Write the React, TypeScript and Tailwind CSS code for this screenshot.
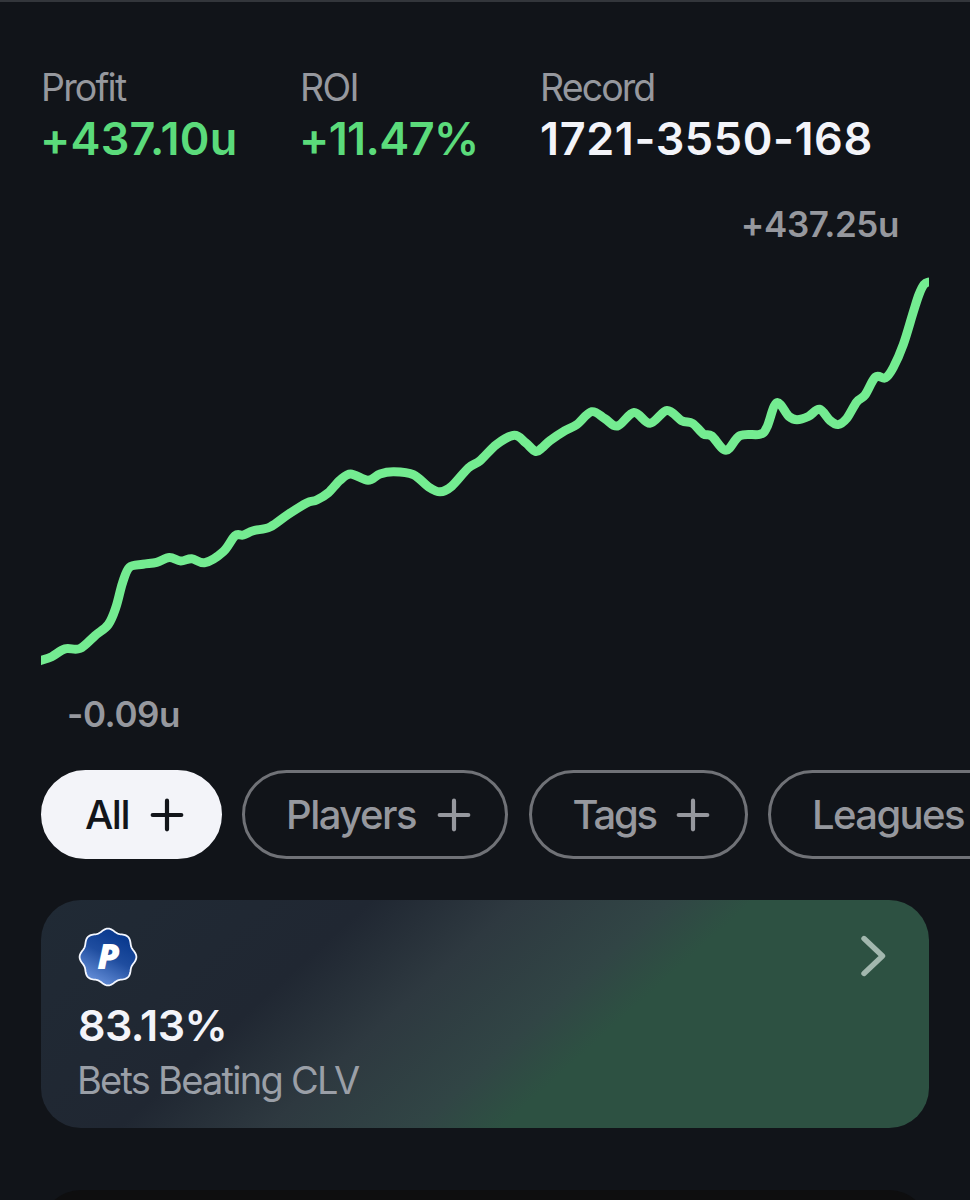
type Point = [number, number];

const stats = [
  { label: "Profit", value: "+437.10u", width: "w-[259px]", labelStyle: "tracking-[-1.8px]", color: "-ml-px text-[#5bdb7b] tracking-[0.2px]" },
  { label: "ROI", value: "+11.47%", width: "w-[240px]", labelStyle: "tracking-[-1.6px]", color: "-ml-px text-[#5bdb7b] tracking-[-0.6px]" },
  { label: "Record", value: "1721-3550-168", width: "w-[340px]", labelStyle: "tracking-[-1.9px]", color: "text-[#f3f4f9] tracking-[0.6px]" },
];

const filters = [
  { label: "All", width: "w-[180.5px]", labelStyle: "tracking-[-1.5px]", active: true },
  { label: "Players", width: "w-[266px]", labelStyle: "tracking-[-1.5px]", active: false },
  { label: "Tags", width: "w-[219px]", labelStyle: "tracking-[-2.2px]", active: false },
  { label: "Leagues", width: "w-[280px]", labelStyle: "tracking-[-1.6px]", active: false },
];

const history: Point[] = [
  [36, 662], [41.3, 660.3], [51.7, 656.7], [65, 648.9], [80, 648.5], [95, 635.7], [108.3, 624.5], [116, 607],
  [122.5, 583], [129.5, 567.2], [143, 564.3], [156.7, 562.3], [169.3, 557.5], [180.7, 561], [191.7, 558.7],
  [205, 562.7], [223.3, 551.7], [235, 535.8], [243.3, 535], [253.3, 530.7], [270, 527], [288, 514.5],
  [306.7, 503], [316.7, 500], [328.3, 492.7], [340, 480.3], [350.7, 474], [368, 480.3], [380, 473.9],
  [394, 471.7], [413.3, 474.6], [428.3, 486.7], [440, 491.8], [451.7, 486.2], [468.3, 468], [480, 460.7],
  [496.7, 444.3], [514.3, 435.3], [525.5, 442.7], [535.5, 451.4], [542, 447.8], [550, 440.7], [565, 430.7],
  [576.7, 424.7], [591.7, 411.7], [605, 418.8], [617.5, 426], [634, 412.5], [650, 423.3], [667, 410.5],
  [681.7, 420.7], [692.7, 423.5], [703.3, 433.9], [711.7, 436], [726, 450.3], [740, 435.6], [760, 434.3],
  [767, 427], [776.7, 402.7], [789, 416.5], [797, 419.7], [808.3, 416.5], [819.5, 409.3], [830, 420.5],
  [838, 424.6], [846.7, 418.5], [856.7, 402], [865, 395], [875.5, 377], [885.5, 377.9], [893.3, 367.5],
  [903.3, 344.5], [913.3, 312], [919, 294.5], [924, 284.5], [929, 282], [934, 282],
];

function smoothPath(points: Point[]) {
  let d = `M${points[0][0]} ${points[0][1]}`;
  for (let i = 0; i < points.length - 1; i++) {
    const [x0, y0] = points[Math.max(i - 1, 0)];
    const [x1, y1] = points[i];
    const [x2, y2] = points[i + 1];
    const [x3, y3] = points[Math.min(i + 2, points.length - 1)];
    d += ` C${x1 + (x2 - x0) / 6} ${y1 + (y2 - y0) / 6} ${x2 - (x3 - x1) / 6} ${y2 - (y3 - y1) / 6} ${x2} ${y2}`;
  }
  return d;
}

// eight rounded lobes around the centre of the badge
function sealPath() {
  const points: string[] = [];
  for (let i = 0; i < 160; i++) {
    const a = (i / 160) * Math.PI * 2;
    const r = 26.9 + 1.5 * Math.cos(a * 8);
    points.push(`${(30 + r * Math.sin(a)).toFixed(2)} ${(30 - r * Math.cos(a)).toFixed(2)}`);
  }
  return `M${points.join("L")}Z`;
}

function PlusIcon() {
  return (
    <svg viewBox="0 0 34 34" className="size-[34px] shrink-0" fill="none" stroke="currentColor" strokeWidth="4.2" strokeLinecap="round">
      <path d="M17 2.700v28.600M2.700 17h28.600" />
    </svg>
  );
}

function Badge() {
  return (
    <svg viewBox="0 0 60 60" className="size-[60px]">
      <defs>
        <linearGradient id="badge" x1="0.7" y1="0.15" x2="0.25" y2="1">
          <stop offset="0" stopColor="#0b3b90" />
          <stop offset="0.4" stopColor="#1f4d9f" />
          <stop offset="1" stopColor="#6c95de" />
        </linearGradient>
      </defs>
      <path d={sealPath()} fill="url(#badge)" stroke="#f4f7ff" strokeWidth="1.8" strokeLinejoin="round" />
      <text x="30.500" y="42.300" textAnchor="middle" fill="#fff" fontFamily="Open Sans" fontSize="36" fontWeight="800" fontStyle="italic">
        P
      </text>
    </svg>
  );
}

export default function App() {
  return (
    <div className="flex h-[1200px] w-[970px] flex-col overflow-hidden border-t-2 border-[#33363b] bg-[#111419] font-['Inter',sans-serif]">
      <header className="flex pt-[63px] pl-[41px]">
        {stats.map((s) => (
          <div key={s.label} className={`shrink-0 whitespace-nowrap ${s.width}`}>
            <div className={`text-[37.5px] leading-[46px] text-[#96989e] ${s.labelStyle}`}>{s.label}</div>
            <div className={`text-[45px] leading-[55px] font-semibold ${s.color}`}>{s.value}</div>
          </div>
        ))}
      </header>

      <section className="mx-[41px] mt-[36px] text-[35px] leading-[44px] font-semibold tracking-[-0.4px] text-[#96989e]">
        <div className="pr-[30px] text-right">+437.25u</div>
        <svg viewBox="41 246 888 446" className="block h-[446px] w-[888px] overflow-hidden">
          <path d={smoothPath(history)} fill="none" stroke="#74ec91" strokeWidth="9" strokeLinejoin="round" />
        </svg>
        <div className="pl-[26px]">-0.09u</div>
      </section>

      <nav className="mt-[34px] flex gap-[20.5px] pl-[41px]">
        {filters.map((f) => (
          <button
            key={f.label}
            className={`flex h-[89px] shrink-0 items-center justify-between rounded-full border-[3px] pr-[34.5px] pl-[41px] text-[40px] font-medium ${f.width} ${f.labelStyle} ${
              f.active ? "border-[#f3f4f9] bg-[#f3f4f9] text-[#12151a]" : "border-[#707277] text-[#96989e]"
            }`}
          >
            {f.label}
            <PlusIcon />
          </button>
        ))}
      </nav>

      <section className="mx-[41px] mt-[41px] flex h-[228px] shrink-0 justify-between rounded-[40px] bg-[linear-gradient(138deg,#202a35_0%,#202732_29%,#2e3940_42%,#314545_55%,#2d5142_62.5%,#2d5142_100%)] pt-[27px] pr-[43px] pl-[37px]">
        <div>
          <Badge />
          <div className="mt-[11px] text-[43px] leading-[54px] font-semibold tracking-[-0.6px] text-[#f3f4f9]">83.13%</div>
          <div className="mt-[3px] -ml-px text-[38px] leading-[50px] tracking-[-1.75px] text-[#9a9fa7]">Bets Beating CLV</div>
        </div>
        <svg viewBox="0 0 26 44" className="mt-[7px] h-[44px] w-[26px]" fill="none" stroke="#a2b7ae" strokeWidth="5.4" strokeLinecap="round" strokeLinejoin="round">
          <path d="M4 4.500L22.500 22L4 39.500" />
        </svg>
      </section>

      <section className="mx-[41px] mt-[62px] h-[100px] shrink-0 rounded-[40px] bg-[#0e0e0f]" />
    </div>
  );
}
